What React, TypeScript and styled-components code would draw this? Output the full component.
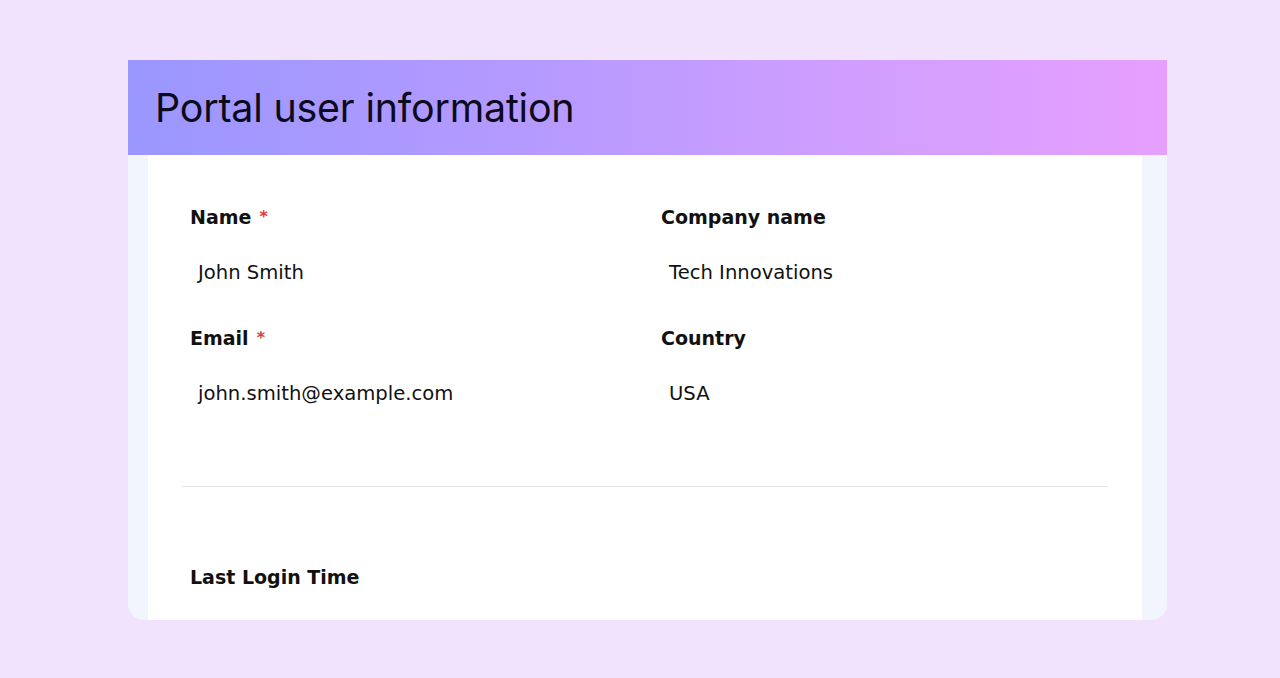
import React from 'react';
import styled, { createGlobalStyle } from 'styled-components';

const GlobalStyle = createGlobalStyle`
  html, body {
    margin: 0;
    padding: 0;
    background: #f1e2fd;
  }
  body {
    font-family: "DejaVu Sans", "Noto Sans", sans-serif;
  }
`;

interface Field {
  label: string;
  value?: string;
  required?: boolean;
}

const fields: Field[] = [
  { label: 'Name', value: 'John Smith', required: true },
  { label: 'Company name', value: 'Tech Innovations' },
  { label: 'Email', value: 'john.smith@example.com', required: true },
  { label: 'Country', value: 'USA' },
];

const App: React.FC = () => {
  return (
    <>
      <GlobalStyle />
      <Page>
        <Card>
          <Header>
            <Title>Portal user information</Title>
          </Header>
          <Body>
            <Panel>
              <FieldGrid>
                {fields.map((f) => (
                  <FieldBox key={f.label}>
                    <Label>
                      {f.label}
                      {f.required && <Required>*</Required>}
                    </Label>
                    <Value>{f.value}</Value>
                  </FieldBox>
                ))}
              </FieldGrid>
              <Divider />
              <Section>
                <Label>Last Login Time</Label>
              </Section>
            </Panel>
          </Body>
        </Card>
      </Page>
    </>
  );
};

const Page = styled.div`
  width: 1280px;
  height: 678px;
  box-sizing: border-box;
  padding: 60px 0 0 128px;
  display: flex;
  align-items: flex-start;
  background: #f1e2fd;
  overflow: hidden;
`;

const Card = styled.div`
  width: 1039px;
  height: 560px;
  display: flex;
  flex-direction: column;
  border-radius: 0 0 16px 16px;
  overflow: hidden;
  background: #f3f5fe;
`;

const Header = styled.div`
  height: 95px;
  flex-shrink: 0;
  display: flex;
  align-items: center;
  padding-left: 27px;
  background: linear-gradient(90deg, #9a97fe 0%, #b69afe 40%, #d49ffe 75%, #e79ffe 100%);
`;

const Title = styled.h1`
  margin: 0;
  font-family: Inter, "Noto Sans", sans-serif;
  font-weight: 400;
  font-size: 39.4px;
  color: #0c0a1c;
  letter-spacing: -0.2px;
`;

const Body = styled.div`
  flex: 1;
  display: flex;
  padding: 0 25px 0 20px;
`;

const Panel = styled.div`
  flex: 1;
  background: #ffffff;
  padding: 49px 34px 0;
`;

const FieldGrid = styled.div`
  display: grid;
  grid-template-columns: 1fr 1fr;
  column-gap: 32px;
  row-gap: 37px;
  padding: 0 8px;
`;

const FieldBox = styled.div`
  display: flex;
  flex-direction: column;
  gap: 27px;
`;

const Label = styled.div`
  font-family: "DejaVu Sans", "Noto Sans", sans-serif;
  font-weight: 700;
  font-size: 19px;
  line-height: 27px;
  color: #111111;
`;

const Required = styled.span`
  display: inline-block;
  color: #e53935;
  margin-left: 8px;
  font-size: 16px;
  line-height: 0;
  transform: translateY(-2px);
`;

const Value = styled.div`
  font-family: "DejaVu Sans", "Noto Sans", sans-serif;
  font-size: 19.6px;
  line-height: 30px;
  color: #111111;
  padding-left: 8px;
`;

const Divider = styled.hr`
  margin: 77px 0 0;
  border: none;
  border-top: 1.5px solid #e3e3e6;
`;

const Section = styled.div`
  padding: 77px 8px 0;
`;

export default App;
